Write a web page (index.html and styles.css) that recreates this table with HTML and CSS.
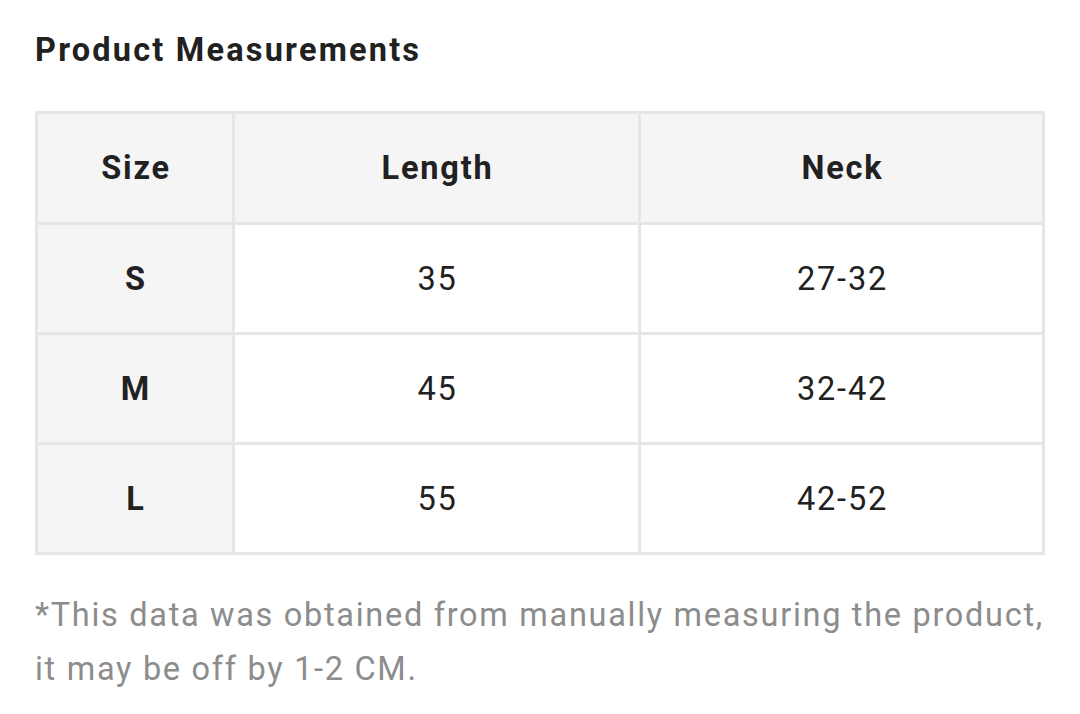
FILE: index.html
```html
<!DOCTYPE html>
<html>
<head>
<meta charset="utf-8">
<link rel="stylesheet" href="styles.css">
</head>
<body>
<div class="wrap">
  <h2 class="title">Product Measurements</h2>
  <table class="sizes">
    <thead>
      <tr><th class="c1">Size</th><th class="c2">Length</th><th class="c3">Neck</th></tr>
    </thead>
    <tbody>
      <tr><th>S</th><td>35</td><td>27-32</td></tr>
      <tr><th>M</th><td>45</td><td>32-42</td></tr>
      <tr><th>L</th><td>55</td><td>42-52</td></tr>
    </tbody>
  </table>
  <p class="note">*This data was obtained from manually measuring the product, it may be off by 1-2 CM.</p>
</div>
</body>
</html>
```
FILE: styles.css
```css
html, body {
  margin: 0;
  padding: 0;
  background: #fff;
}
.wrap {
  padding: 28px 35px 0 35px;
  font-family: Roboto, "Liberation Sans", sans-serif;
  color: #212121;
}
.title {
  margin: 0;
  font-size: 32.5px;
  font-weight: 700;
  line-height: 44px;
  letter-spacing: 2.2px;
}
.sizes {
  margin-top: 39px;
  width: 1010px;
  border-collapse: collapse;
  border: 3px solid #e6e6e6;
  table-layout: fixed;
}
.sizes th, .sizes td {
  border: 3px solid #e6e6e6;
  text-align: center;
  font-size: 32.5px;
  padding: 0 0 0 2px;
  letter-spacing: 1.8px;
}
.sizes thead th {
  height: 108px;
  background: #f5f5f5;
  font-weight: 700;
}
.sizes tbody th, .sizes tbody td {
  height: 107px;
}
.sizes tbody th {
  background: #f5f5f5;
  font-weight: 700;
}
.sizes tbody td {
  font-weight: 400;
}
.c1 { width: 192px; }
.c2 { width: 401px; }
.note {
  margin: 33px 0 0 0;
  font-size: 32.5px;
  line-height: 54px;
  color: #8c8c8c;
  letter-spacing: 1.7px;
}
```
